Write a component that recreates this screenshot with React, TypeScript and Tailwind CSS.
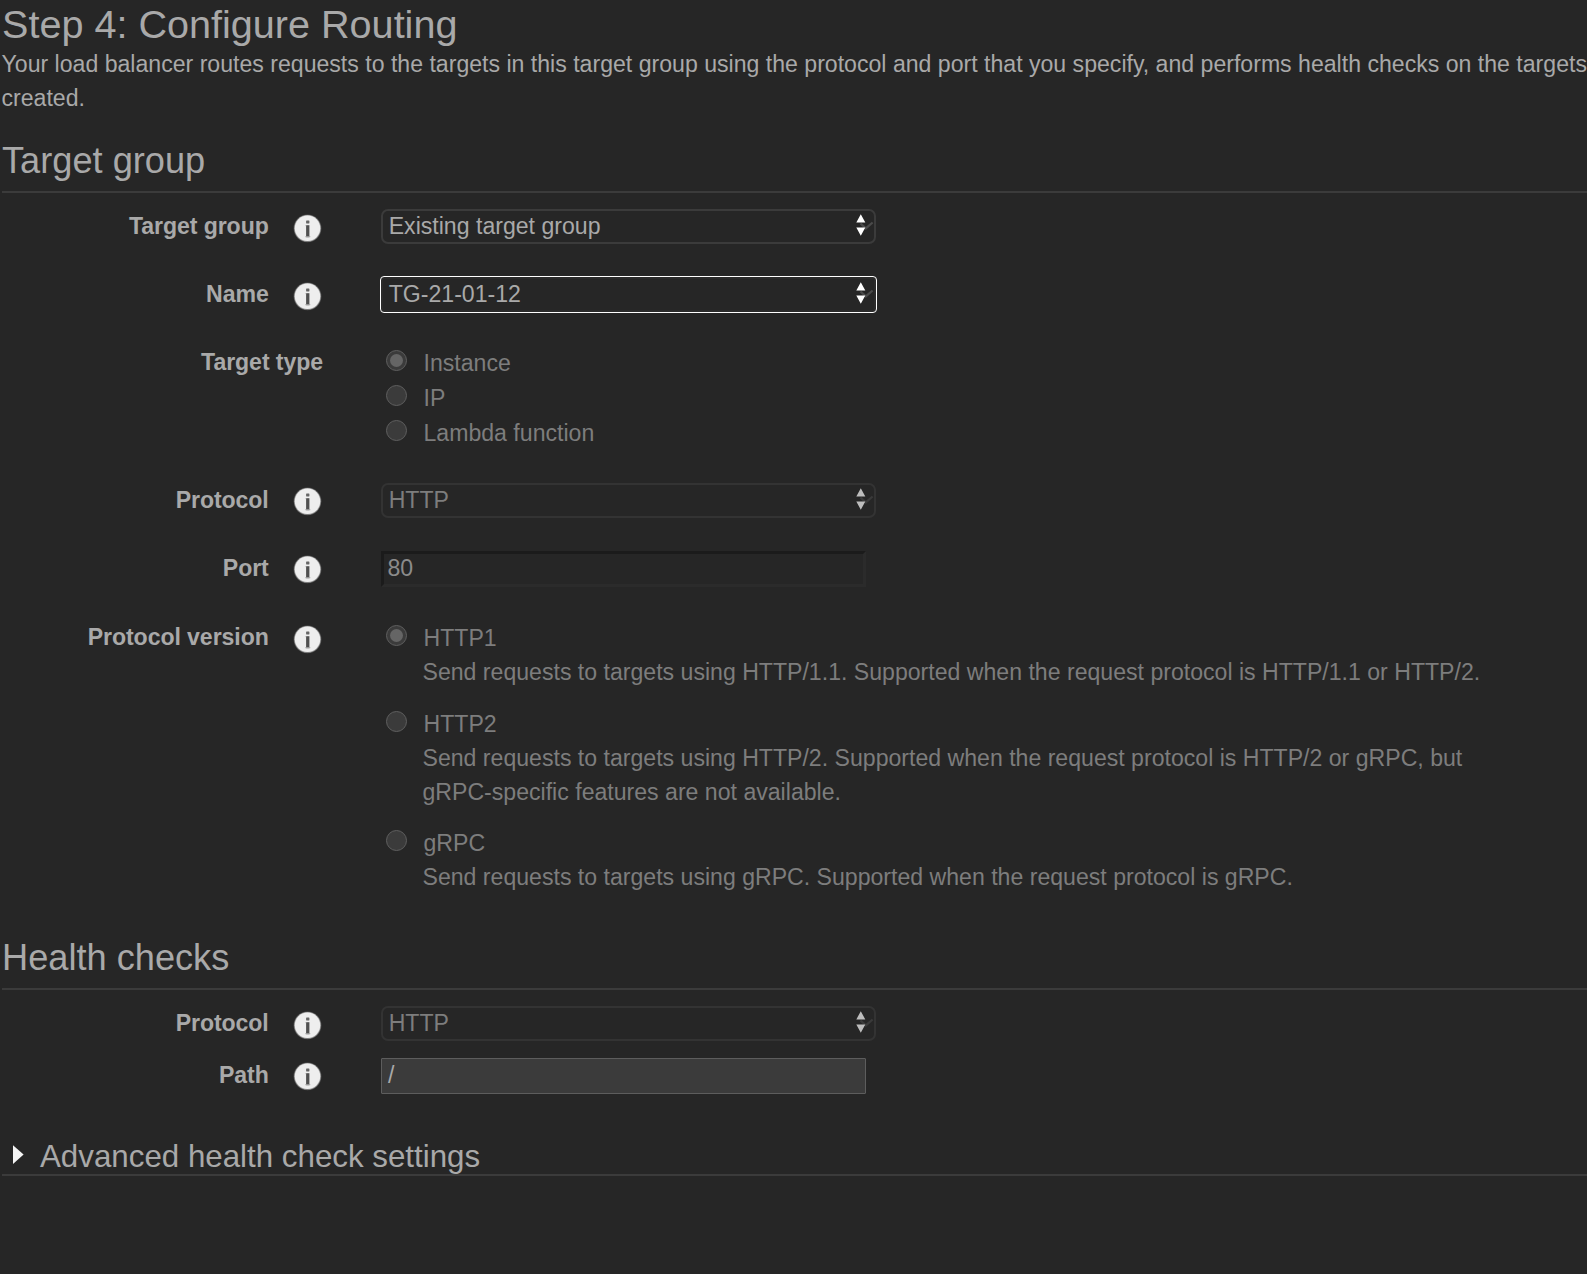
import type { ReactNode } from "react";

function InfoIcon({ className = "" }: { className?: string }) {
  return (
    <svg viewBox="0 0 29 29" className={`mr-[1px] h-[29px] w-[29px] shrink-0 ${className}`} aria-hidden="true">
      <circle cx="14.5" cy="14.3" r="13.9" fill="#555555" />
      <circle cx="14.5" cy="14.3" r="13.3" fill="#a0a0a0" />
      <circle cx="14.5" cy="14.3" r="12.7" fill="#eeeeee" />
      <rect x="13.1" y="6.6" width="3.3" height="2.8" rx="0.4" fill="#666666" />
      <rect x="13.1" y="11.2" width="3.3" height="12" fill="#505050" />
      <rect x="12.3" y="11" width="0.8" height="1.2" fill="#c8c8c8" />
      <rect x="12.3" y="22.2" width="5" height="1" fill="#a8a8a8" />
    </svg>
  );
}

function Row({
  label,
  info = true,
  iconClass = "mt-[5px]",
  className,
  children,
}: {
  label: string;
  info?: boolean;
  iconClass?: string;
  className: string;
  children: ReactNode;
}) {
  return (
    <div className={`flex items-start ${className}`}>
      <div className="mr-[58px] flex w-[321px] items-start justify-end gap-[24.3px]">
        <span className="font-bold tracking-[-0.08px]">{label}</span>
        {info && <InfoIcon className={iconClass} />}
      </div>
      {children}
    </div>
  );
}

function SelectBox({ value, disabled, focused }: { value: string; disabled?: boolean; focused?: boolean }) {
  const border = focused
    ? "border-[#2b2b2b] outline outline-1 outline-white rounded-[3px]"
    : disabled
      ? "border-[#333333] rounded-[7px]"
      : "border-[#3b3b3b] rounded-[7px]";
  return (
    <div
      className={`flex h-[35px] w-[495px] items-start justify-between border-2 pl-[5.7px] ${border} ${
        disabled ? "text-[#7d7d7d]" : "text-[#a9a9a9]"
      }`}
    >
      <span className="-mt-[2px]">{value}</span>
      <svg viewBox="0 0 18 31" className="h-[31px] w-[18px]" aria-hidden="true">
        <path d="M4.5 12.5 L9.8 17.4 L16.6 11.5" fill="none" stroke={disabled ? "#3a3a3a" : "#4a4a4a"} strokeWidth="2.2" />
        <path d="M0.3 11.4 L4.8 3.3 L9.3 11.4 Z M0.3 16.4 L9.3 16.4 L4.8 24.8 Z" fill={disabled ? "#bdbdbd" : "#ffffff"} />
      </svg>
    </div>
  );
}

function Radio({ label, checked }: { label: string; checked?: boolean }) {
  return (
    <div className="flex items-start">
      <span className="ml-[5px] mt-1 flex h-[21px] w-[21px] items-center justify-center rounded-full border border-[#5f5f5f] bg-[#3b3b3b]">
        {checked && <span className="h-[13px] w-[13px] rounded-full bg-[#656565]" />}
      </span>
      <span className="ml-[16.5px]">{label}</span>
    </div>
  );
}

export default function App() {
  return (
    <div className="h-[1274px] w-full overflow-hidden whitespace-nowrap bg-[#262626] pl-[2px] font-['Liberation_Sans',Arial,sans-serif] text-[23.1px] leading-[34px] text-[#a9a9a9]">
      <h1 className="h-[47px] text-[39.6px] leading-[49px]">Step 4: Configure Routing</h1>
      <p className="-ml-[0.5px]">
        Your load balancer routes requests to the targets in this target group using the protocol and port that you specify, and performs health checks on the targets
        <br />
        created.
      </p>

      <h2 className="mt-[20px] h-[58px] border-b-2 border-[#3b3b3b] text-[36.2px] leading-[52px]">Target group</h2>

      <Row label="Target group" className="mt-4 h-[35px]">
        <SelectBox value="Existing target group" />
      </Row>
      <Row label="Name" className="mt-[33px] h-[35px]">
        <SelectBox value="TG-21-01-12" focused />
      </Row>
      <Row label="Target type" info={false} className="mt-[33px] h-[105px]">
        <div className="mt-[1px] grid auto-rows-[35px] text-[#7d7d7d]">
          <Radio label="Instance" checked />
          <Radio label="IP" />
          <Radio label="Lambda function" />
        </div>
      </Row>
      <Row label="Protocol" iconClass="mt-1" className="mt-[33px] h-[35px]">
        <SelectBox value="HTTP" disabled />
      </Row>
      <Row label="Port" iconClass="mt-1" className="mt-[33px] h-[36px]">
        <div className="h-[36px] w-[485px] border-[3px] border-b-[#2b2b2b] border-l-[#1b1b1b] border-r-[#2b2b2b] border-t-[#1b1b1b] pl-[3.5px] text-[#8b8b8b]">
          <span className="-mt-[3px] block">80</span>
        </div>
      </Row>
      <Row label="Protocol version" className="mt-[33px] h-[274px]">
        <div className="mt-[1px] text-[#7d7d7d]">
          <Radio label="HTTP1" checked />
          <p className="ml-[41.5px]">
            Send requests to targets using HTTP/1.1. Supported when the request protocol is HTTP/1.1 or HTTP/2.
          </p>
          <div className="mt-[18px]">
            <Radio label="HTTP2" />
            <p className="ml-[41.5px]">
              Send requests to targets using HTTP/2. Supported when the request protocol is HTTP/2 or gRPC, but
              <br />
              gRPC-specific features are not available.
            </p>
          </div>
          <div className="mt-[17px]">
            <Radio label="gRPC" />
            <p className="ml-[41.5px]">Send requests to targets using gRPC. Supported when the request protocol is gRPC.</p>
          </div>
        </div>
      </Row>

      <h2 className="mt-[38px] h-[58px] border-b-2 border-[#3b3b3b] text-[36.2px] leading-[52px]">Health checks</h2>

      <Row label="Protocol" className="mt-4 h-[35px]">
        <SelectBox value="HTTP" disabled />
      </Row>
      <Row label="Path" iconClass="mt-1" className="mt-[17px] h-[36px]">
        <div className="h-[36px] w-[485px] rounded-[1px] border border-[#5d5d5d] bg-[#3b3b3b] pl-[6px]">
          <span className="-mt-[1px] block">/</span>
        </div>
      </Row>

      <div className="mt-[42px] flex h-10 items-start border-b-2 border-[#3b3b3b]">
        <svg viewBox="0 0 12 20" className="ml-[10px] mt-[8px] h-5 w-3" aria-hidden="true">
          <path d="M1 1.2 L11.6 10.6 L1 20 Z" fill="#f5f5f5" />
        </svg>
        <h3 className="ml-4 text-[31.3px] leading-[41px]">Advanced health check settings</h3>
      </div>
    </div>
  );
}
